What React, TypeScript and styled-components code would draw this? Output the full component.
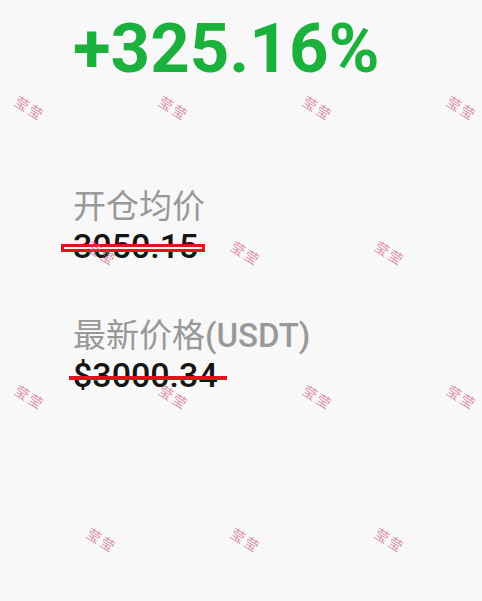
import React from 'react';
import styled, { createGlobalStyle } from 'styled-components';

const GlobalStyle = createGlobalStyle`
  html, body {
    margin: 0;
    padding: 0;
    background: #f8f8f8;
  }
  body {
    font-family: Roboto, "Noto Sans CJK SC", sans-serif;
  }
`;

type Mark = { x: number; y: number };

// staggered watermark grid: odd rows start at 30, even rows shifted by half a step
const MARK_ROWS = [108, 253, 397, 540];
const MARKS: Mark[] = MARK_ROWS.flatMap((y, row) => {
  const xs = row % 2 === 0 ? [30, 174, 318, 462] : [102, 246, 390];
  return xs.map((x) => ({ x, y }));
});

type Strike = 'boxed' | 'solid';

const fields: { label: string; unit?: string; value: string; strike: Strike }[] = [
  { label: '开仓均价', value: '3050.15', strike: 'boxed' },
  { label: '最新价格', unit: '(USDT)', value: '$3000.34', strike: 'solid' },
];

export default function App() {
  return (
    <>
      <GlobalStyle />
      <Page>
        <Change>+325.16%</Change>
        <Fields>
          {fields.map((f) => (
            <Field key={f.label}>
              <Label>
                {f.label}
                {f.unit && <Unit>{f.unit}</Unit>}
              </Label>
              <Value>
                {f.value}
                <StrikeLine variant={f.strike} />
              </Value>
            </Field>
          ))}
        </Fields>
      </Page>
      <Watermarks>
        {MARKS.map((m, i) => (
          <WatermarkText key={i} style={{ left: m.x, top: m.y }}>
            莹莹
          </WatermarkText>
        ))}
      </Watermarks>
    </>
  );
}

const Page = styled.main`
  min-height: 601px;
  box-sizing: border-box;
  padding: 14px 0 0 73px;
  display: flex;
  flex-direction: column;
`;

const Change = styled.div`
  font-family: Roboto, sans-serif;
  font-size: 69px;
  font-weight: 700;
  line-height: 70px;
  color: #1cb03c;
`;

const Fields = styled.div`
  margin-top: 106px;
  display: flex;
  flex-direction: column;
  gap: 56px;
`;

const Field = styled.section`
  display: flex;
  flex-direction: column;
  align-items: flex-start;
`;

const Label = styled.div`
  font-family: Roboto, "Noto Sans CJK SC", sans-serif;
  font-size: 33px;
  font-weight: 400;
  line-height: 34px;
  margin-bottom: 6px;
  color: #999999;
`;

const Unit = styled.span`
  font-weight: 500;
`;

const Value = styled.div`
  position: relative;
  font-family: Roboto, sans-serif;
  font-size: 34px;
  font-weight: 500;
  line-height: 33px;
  color: #151515;
`;

const StrikeLine = styled.span<{ variant: Strike }>`
  position: absolute;
  box-sizing: border-box;
  ${({ variant }) =>
    variant === 'boxed'
      ? `
    left: -12px;
    right: -7px;
    top: 14px;
    height: 8px;
    border: 3px solid #e3121a;
    background: #fff2f2;
  `
      : `
    left: -4px;
    right: -9px;
    top: 17px;
    height: 4px;
    background: #e3121a;
  `}
`;

const Watermarks = styled.div`
  position: fixed;
  inset: 0;
  pointer-events: none;
  overflow: hidden;
`;

const WatermarkText = styled.span`
  position: absolute;
  transform: translate(-50%, -50%) rotate(32deg);
  font-family: "Noto Sans CJK SC", sans-serif;
  font-size: 14px;
  line-height: 1;
  letter-spacing: 2px;
  color: rgba(206, 92, 128, 0.7);
  white-space: nowrap;
`;
